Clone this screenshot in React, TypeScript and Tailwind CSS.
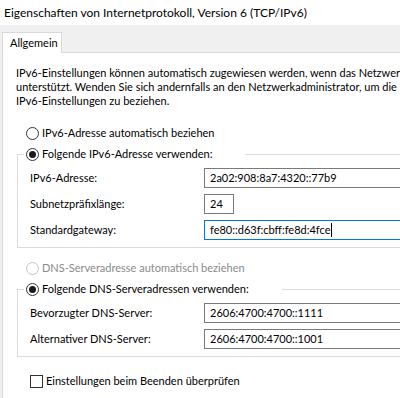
import type { ReactNode } from 'react'

function Radio({ checked, disabled }: { checked?: boolean; disabled?: boolean }) {
  return (
    <span
      className={`flex h-[13px] w-[13px] shrink-0 items-center justify-center rounded-full border bg-white ${
        disabled ? 'border-[#c4c4c4]' : 'border-[#333]'
      }`}
    >
      {checked && <span className="h-[7px] w-[7px] rounded-full bg-[#1a1a1a]" />}
    </span>
  )
}

function RadioRow({ label, checked, disabled }: { label: string; checked?: boolean; disabled?: boolean }) {
  return (
    <div className={`flex h-4 items-center gap-[3px] ${disabled ? 'text-[#8a8a8a]' : 'text-black'}`}>
      <Radio checked={checked} disabled={disabled} />
      <span>{label}</span>
    </div>
  )
}

function Field({ label, value, width = 'w-[230px]', focused }: { label: string; value: string; width?: string; focused?: boolean }) {
  return (
    <div className="flex h-5 items-center">
      <span className="w-[174px] shrink-0">{label}</span>
      <div
        className={`flex h-5 ${width} shrink-0 items-center border px-[5px] ${
          focused ? 'border-[#0078d7]' : 'border-[#7a7a7a]'
        }`}
      >
        <span className="whitespace-nowrap">{value}</span>
        {focused && <span className="ml-px h-[14px] w-px bg-black" />}
      </div>
    </div>
  )
}

// the radio control over the frame is wider than its text, so the frame line stops short
function Group({ header, legendWidth, children }: { header: ReactNode; legendWidth: string; children: ReactNode }) {
  return (
    <fieldset className="ml-[14px] w-[420px] border border-[#dcdcdc] pb-[7px] pl-3">
      <legend className={`-ml-[6px] pl-[2px] ${legendWidth}`}>{header}</legend>
      <div className="mt-[6px] flex flex-col gap-[6px]">{children}</div>
    </fieldset>
  )
}

export default function App() {
  return (
    <div className="h-[398px] w-[400px] overflow-hidden bg-[#f0f0f0] text-[11px] leading-4 text-black [font-family:Lato,sans-serif]">
      <div className="flex h-[25px] items-center bg-white px-1 text-[12px] text-black">
        Eigenschaften von Internetprotokoll, Version 6 (TCP/IPv6)
      </div>

      <div className="flex pt-[7px] pl-[2px]">
        <div className="relative z-10 -mb-px flex h-[21px] w-[60px] items-center border border-b-0 border-[#d9d9d9] bg-white pl-[7px]">
          Allgemein
        </div>
      </div>

      <div className="ml-[2px] h-[400px] w-[440px] border-t border-l border-[#d9d9d9] bg-white">
        <p className="mt-[13px] pl-[13px] leading-[14px] whitespace-nowrap">
          IPv6-Einstellungen können automatisch zugewiesen werden, wenn das Netzwerk
          <br />
          unterstützt. Wenden Sie sich andernfalls an den Netzwerkadministrator, um die
          <br />
          IPv6-Einstellungen zu beziehen.
        </p>

        <div className="mt-[17px] pl-[23px]">
          <RadioRow label="IPv6-Adresse automatisch beziehen" />
        </div>

        <div className="mt-[5px]">
          <Group legendWidth="w-[221px]" header={<RadioRow label="Folgende IPv6-Adresse verwenden:" checked />}>
            <Field label="IPv6-Adresse:" value="2a02:908:8a7:4320::77b9" />
            <Field label="Subnetzpräfixlänge:" value="24" width="w-[30px]" />
            <Field label="Standardgateway:" value="fe80::d63f:cbff:fe8d:4fce" focused />
          </Group>
        </div>

        <div className="mt-[12px] pl-[23px]">
          <RadioRow label="DNS-Serveradresse automatisch beziehen" disabled />
        </div>

        <div className="mt-[5px]">
          <Group legendWidth="w-[258px]" header={<RadioRow label="Folgende DNS-Serveradressen verwenden:" checked />}>
            <Field label="Bevorzugter DNS-Server:" value="2606:4700:4700::1111" />
            <Field label="Alternativer DNS-Server:" value="2606:4700:4700::1001" />
          </Group>
        </div>

        <div className="mt-4 flex h-4 items-center gap-[3px] pl-[27px]">
          <span className="h-[13px] w-[13px] shrink-0 border border-[#333] bg-white" />
          <span>Einstellungen beim Beenden überprüfen</span>
        </div>
      </div>
    </div>
  )
}
